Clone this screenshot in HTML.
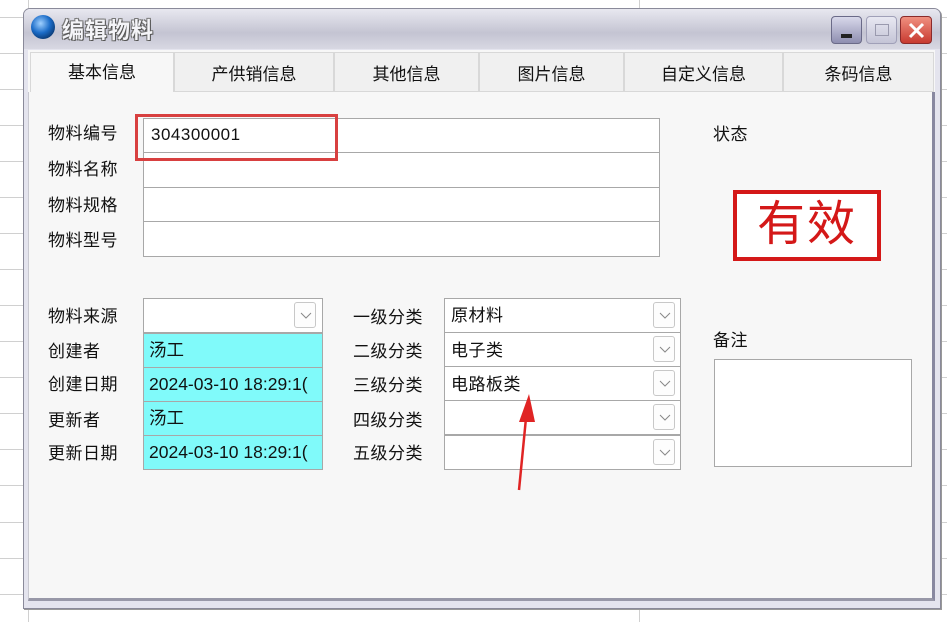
<!DOCTYPE html>
<html><head><meta charset="utf-8"><style>
*{margin:0;padding:0;box-sizing:border-box}
body{width:947px;height:622px;background:#fff;position:relative;overflow:hidden;font-family:"Liberation Sans","Noto Sans CJK SC",sans-serif;color:#111}
.a{position:absolute}
.hl{position:absolute;height:1px;background:#d0d0d0}
.vl{position:absolute;width:1px;background:#d0d0d0}
.lbl{position:absolute;font-size:17px;line-height:20px;white-space:nowrap;letter-spacing:0.5px}
.inp{position:absolute;background:#fff;border:1px solid #a8a8a8}
.cy{position:absolute;background:#80fafa;border:1px solid #a8a8a8;font-size:17.5px;line-height:33px;padding-left:5px;white-space:nowrap;overflow:hidden}
.dd{position:absolute;width:22px;height:26px;border:1px solid #c8c8c8;border-radius:3px;background:#fdfdfd}
.dd svg{position:absolute;left:5px;top:9px}
.tab{position:absolute;top:52px;height:40px;background:#f0f0f0;border:1px solid #d8d8d8;font-size:17px;text-align:center;line-height:44px}
</style></head><body>
<div class="vl" style="left:28px;top:0;height:622px"></div>
<div class="vl" style="left:639px;top:0;height:622px"></div>
<div class="hl" style="left:0;width:947px;top:17px"></div>
<div class="hl" style="left:0;width:947px;top:53px"></div>
<div class="hl" style="left:0;width:947px;top:89px"></div>
<div class="hl" style="left:0;width:947px;top:125px"></div>
<div class="hl" style="left:0;width:947px;top:161px"></div>
<div class="hl" style="left:0;width:947px;top:197px"></div>
<div class="hl" style="left:0;width:947px;top:233px"></div>
<div class="hl" style="left:0;width:947px;top:269px"></div>
<div class="hl" style="left:0;width:947px;top:305px"></div>
<div class="hl" style="left:0;width:947px;top:341px"></div>
<div class="hl" style="left:0;width:947px;top:377px"></div>
<div class="hl" style="left:0;width:947px;top:413px"></div>
<div class="hl" style="left:0;width:947px;top:449px"></div>
<div class="hl" style="left:0;width:947px;top:485px"></div>
<div class="hl" style="left:0;width:947px;top:522px"></div>
<div class="hl" style="left:0;width:947px;top:558px"></div>
<div class="hl" style="left:0;width:947px;top:594px"></div>

<div class="a" style="left:23px;top:8px;width:918px;height:601px;background:#e4e4ee;border:1px solid #8a8a9a;border-radius:7px 7px 0 0;box-shadow:1px 1px 0 #999"></div>
<div class="a" style="left:24px;top:9px;width:916px;height:40px;border-radius:6px 6px 0 0;background:linear-gradient(#e8e8f0,#c4c4d2 60%,#d8d8e2)"></div>
<div class="a" style="left:31px;top:15px;width:24px;height:24px;border-radius:50%;background:radial-gradient(circle at 40% 35%,#9fd0ff,#1b6cc8 45%,#0b3d7a 75%,#2a8a3a)"></div>
<div class="a" style="left:62px;top:13px;font-size:22px;font-weight:bold;color:#f4f4f8;text-shadow:1px 1px 0 #555,-1px -1px 0 #777,1px -1px 0 #777,-1px 1px 0 #777;letter-spacing:1px">编辑物料</div>
<div class="a" style="left:831px;top:16px;width:31px;height:28px;border:1px solid #6a6a88;border-radius:4px;background:linear-gradient(#d8d8ea,#8e8eb0)"><div class="a" style="left:9px;top:17px;width:11px;height:4px;background:#222"></div></div>
<div class="a" style="left:866px;top:16px;width:31px;height:28px;border:1px solid #a0a0b8;border-radius:4px;background:linear-gradient(#e8e8f2,#c4c4d6)"><div class="a" style="left:8px;top:7px;width:14px;height:12px;border:1px solid #9a9aae"></div></div>
<div class="a" style="left:900px;top:16px;width:32px;height:28px;border:1px solid #8a2a2a;border-radius:4px;background:linear-gradient(#f09080,#c83a30)"><svg class="a" style="left:7px;top:5px" width="17" height="17"><path d="M2 2L15 15M15 2L2 15" stroke="#fff" stroke-width="3"/></svg></div>

<div class="a" style="left:28px;top:91px;width:907px;height:510px;background:#f7f7f7;border:1px solid #c8c8d0;border-right:3px solid #8888a0;border-bottom:3px solid #9898a8"></div>
<div class="a" style="left:28px;top:50px;width:907px;height:42px;background:#f7f7f7"></div>
<div class="tab" style="left:30px;width:144px;background:#f7f7f7;border-bottom:none;line-height:40px">基本信息</div>
<div class="tab" style="left:174px;width:160px">产供销信息</div>
<div class="tab" style="left:334px;width:145px">其他信息</div>
<div class="tab" style="left:479px;width:145px">图片信息</div>
<div class="tab" style="left:624px;width:159px">自定义信息</div>
<div class="tab" style="left:783px;width:151px">条码信息</div>

<div class="lbl" style="left:48px;top:124px">物料编号</div>
<div class="lbl" style="left:48px;top:160px">物料名称</div>
<div class="lbl" style="left:48px;top:196px">物料规格</div>
<div class="lbl" style="left:48px;top:231px">物料型号</div>
<div class="inp" style="left:143px;top:118px;width:517px;height:35px"></div>
<div class="inp" style="left:143px;top:152px;width:517px;height:36px"></div>
<div class="inp" style="left:143px;top:187px;width:517px;height:35px"></div>
<div class="inp" style="left:143px;top:221px;width:517px;height:36px"></div>
<div class="lbl" style="left:151px;top:125px">304300001</div>
<div class="a" style="left:135px;top:114px;width:203px;height:47px;border:3px solid #d84040"></div>

<div class="lbl" style="left:713px;top:125px">状态</div>
<div class="a" style="left:733px;top:190px;width:148px;height:71px;border:4px solid #d41818;background:#fff;color:#d41818;font-size:48px;line-height:62px;text-align:center;letter-spacing:2px">有效</div>

<div class="lbl" style="left:48px;top:307px">物料来源</div>
<div class="lbl" style="left:48px;top:342px">创建者</div>
<div class="lbl" style="left:48px;top:375px">创建日期</div>
<div class="lbl" style="left:48px;top:411px">更新者</div>
<div class="lbl" style="left:48px;top:444px">更新日期</div>
<div class="inp" style="left:143px;top:298px;width:180px;height:35px"></div>
<div class="dd" style="left:294px;top:302px"><svg width="12" height="8"><path d="M1 1L6 6L11 1" stroke="#888" fill="none"/></svg></div>
<div class="cy" style="left:143px;top:333px;width:180px;height:35px">汤工</div>
<div class="cy" style="left:143px;top:367px;width:180px;height:35px">2024-03-10 18:29:1(</div>
<div class="cy" style="left:143px;top:401px;width:180px;height:35px">汤工</div>
<div class="cy" style="left:143px;top:435px;width:180px;height:35px">2024-03-10 18:29:1(</div>

<div class="lbl" style="left:353px;top:308px">一级分类</div>
<div class="lbl" style="left:353px;top:342px">二级分类</div>
<div class="lbl" style="left:353px;top:376px">三级分类</div>
<div class="lbl" style="left:353px;top:411px">四级分类</div>
<div class="lbl" style="left:353px;top:444px">五级分类</div>
<div class="inp" style="left:444px;top:298px;width:237px;height:35px"><div class="lbl" style="left:6px;top:7px">原材料</div></div>
<div class="inp" style="left:444px;top:332px;width:237px;height:35px"><div class="lbl" style="left:6px;top:8px">电子类</div></div>
<div class="inp" style="left:444px;top:366px;width:237px;height:35px"><div class="lbl" style="left:6px;top:8px">电路板类</div></div>
<div class="inp" style="left:444px;top:400px;width:237px;height:35px"></div>
<div class="inp" style="left:444px;top:435px;width:237px;height:35px"></div>
<div class="dd" style="left:653px;top:302px"><svg width="12" height="8"><path d="M1 1L6 6L11 1" stroke="#888" fill="none"/></svg></div>
<div class="dd" style="left:653px;top:336px"><svg width="12" height="8"><path d="M1 1L6 6L11 1" stroke="#888" fill="none"/></svg></div>
<div class="dd" style="left:653px;top:370px"><svg width="12" height="8"><path d="M1 1L6 6L11 1" stroke="#888" fill="none"/></svg></div>
<div class="dd" style="left:653px;top:404px"><svg width="12" height="8"><path d="M1 1L6 6L11 1" stroke="#888" fill="none"/></svg></div>
<div class="dd" style="left:653px;top:439px"><svg width="12" height="8"><path d="M1 1L6 6L11 1" stroke="#888" fill="none"/></svg></div>

<div class="lbl" style="left:713px;top:331px">备注</div>
<div class="inp" style="left:714px;top:359px;width:198px;height:108px"></div>

<svg class="a" style="left:505px;top:390px" width="40" height="105"><path d="M14 100L21 28" stroke="#e02424" stroke-width="2.5"/><path d="M24 4L14 32L30 32Z" fill="#e02424"/></svg>
</body></html>
